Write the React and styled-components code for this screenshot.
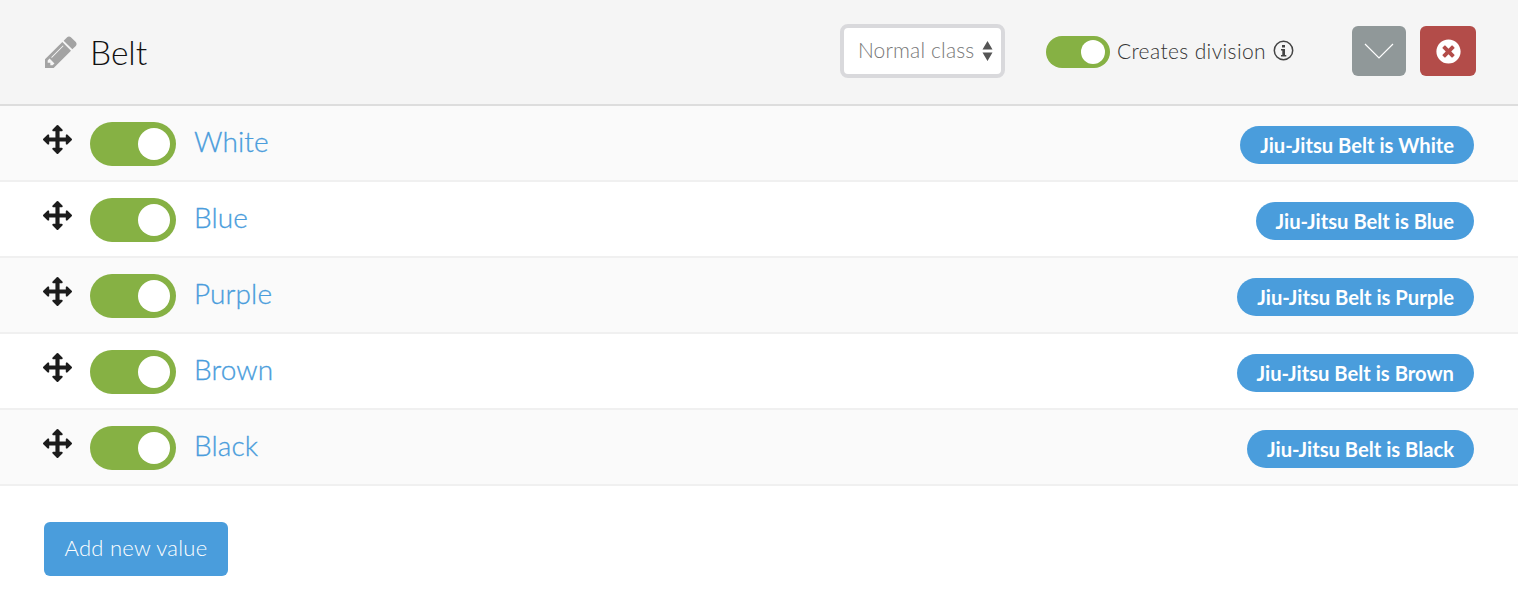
import React from 'react';
import styled, { createGlobalStyle } from 'styled-components';
import { FaTimesCircle } from 'react-icons/fa';

const GlobalStyle = createGlobalStyle`
  html, body {
    margin: 0;
    padding: 0;
    background: #fff;
    font-family: "Lato", "Liberation Sans", sans-serif;
  }
`;

const Page = styled.div`
  width: 1518px;
  height: 612px;
  overflow: hidden;
  background: #fff;
`;

const Header = styled.header`
  display: flex;
  align-items: center;
  height: 104px;
  padding: 0 42px 0 45px;
  background: #f5f5f5;
  border-bottom: 2px solid #ddd;
`;

const Title = styled.h2`
  display: flex;
  align-items: center;
  gap: 13px;
  flex: 1;
  margin: 0;
  font-size: 33.5px;
  font-weight: 300;
  color: #111;
`;

const PencilIcon = styled.svg`
  width: 32px;
  height: 32px;
  fill: #a3a3a3;
`;

const SelectBox = styled.div`
  display: flex;
  align-items: center;
  justify-content: space-between;
  box-sizing: border-box;
  width: 165px;
  height: 54px;
  padding: 0 8px 4px 14px;
  margin: 0 41px 2px 0;
  background: #fff;
  border: 4px solid #d9d9dc;
  border-radius: 8px;
  font-size: 21px;
  font-weight: 300;
  letter-spacing: 0.15px;
  color: #777;
`;

const SelectArrows = styled.svg`
  width: 11px;
  height: 22px;
  fill: #555;
  margin-top: 4px;
`;

const Track = styled.div`
  display: flex;
  align-items: center;
  justify-content: flex-end;
  flex: none;
  box-sizing: border-box;
  width: ${p => (p.$small ? 64 : 86)}px;
  height: ${p => (p.$small ? 32 : 44)}px;
  margin-top: ${p => (p.$small ? 0 : 2)}px;
  padding-right: ${p => (p.$small ? 5 : 6)}px;
  background: #86b144;
  border-radius: 22px;
`;

const Knob = styled.div`
  width: ${p => (p.$small ? 24 : 32)}px;
  height: ${p => (p.$small ? 24 : 32)}px;
  background: #fff;
  border-radius: 50%;
`;

const DivisionLabel = styled.div`
  display: flex;
  align-items: center;
  gap: 7px;
  margin: 0 58px 4px 7px;
  font-size: 21px;
  font-weight: 300;
  letter-spacing: 0.38px;
  color: #333;
`;

const InfoIcon = styled.svg`
  width: 21px;
  height: 21px;
`;

const SquareButton = styled.button`
  display: flex;
  align-items: center;
  justify-content: center;
  width: ${p => p.$width}px;
  height: 50px;
  margin: 0 0 2px ${p => p.$gap || 0}px;
  padding: 0;
  border: 0;
  border-radius: 6px;
  background: ${p => p.$color};
  color: #fff;
`;

const ChevronIcon = styled.svg`
  width: 30px;
  height: 16px;
  fill: none;
  stroke: #fff;
  stroke-width: 1.2;
`;

const Row = styled.div`
  display: flex;
  align-items: center;
  box-sizing: border-box;
  height: 76px;
  padding: 0 44px 0 43px;
  background: ${p => (p.$striped ? '#fafafa' : '#fff')};
  border-bottom: 2px solid #f0f0f0;
`;

const MoveIcon = styled.svg`
  flex: none;
  width: 29px;
  height: 29px;
  margin: -8px 18px 0 0;
  fill: #1c1c1c;
`;

const ValueName = styled.a`
  flex: 1;
  margin: -4px 0 0 18px;
  font-size: 28px;
  font-weight: 300;
  letter-spacing: 0.1px;
  color: #4a9ddc;
  -webkit-text-stroke: 0.3px #4a9ddc;
`;

const Tag = styled.span`
  display: flex;
  align-items: center;
  box-sizing: border-box;
  height: 38px;
  padding: 0 20px;
  margin: 4px 0 0;
  background: #4a9ddc;
  border-radius: 19px;
  font-size: 20.2px;
  font-weight: 700;
  color: #fff;
`;

const Footer = styled.div`
  padding: 36px 44px;
`;

const AddButton = styled.button`
  width: 184px;
  height: 54px;
  padding: 0 0 4px;
  border: 0;
  border-radius: 6px;
  background: #4a9ddc;
  font-family: inherit;
  font-size: 22px;
  font-weight: 300;
  letter-spacing: 0.25px;
  color: #fff;
`;

const values = ['White', 'Blue', 'Purple', 'Brown', 'Black'];

const App = () => {
  return (
    <>
      <GlobalStyle />
      <Page>
        <Header>
          <Title>
            <PencilIcon viewBox="128 128 1536 1536">
              <path d="M491 1536l91-91-235-235-91 91v107h128v128h107zm523-928q0-22-22-22-10 0-17 7l-542 542q-7 7-7 17 0 22 22 22 10 0 17-7l542-542q7-7 7-17zm-54-192l416 416-832 832h-416v-416zm683 96q0 53-37 90l-166 166-416-416 166-165q36-38 90-38 53 0 91 38l235 234q37 39 37 91z" />
            </PencilIcon>
            Belt
          </Title>
          <SelectBox>
            Normal class
            <SelectArrows viewBox="0 0 11 22">
              <path d="M5.5 1 10.5 9.5H.5zM.5 12.5h10L5.5 21z" />
            </SelectArrows>
          </SelectBox>
          <Track $small>
            <Knob $small />
          </Track>
          <DivisionLabel>
            Creates division
            <InfoIcon viewBox="0 0 21 21">
              <circle cx="10.5" cy="10.5" r="9.2" fill="none" stroke="#444" strokeWidth="1.5" />
              <path d="M9 5h3v2.4H9zM8 9h4v6h1.3v1.6H8V15h1.3v-4.4H8z" fill="#444" />
            </InfoIcon>
          </DivisionLabel>
          <SquareButton $width={54} $color="#909899" aria-label="Collapse">
            <ChevronIcon viewBox="0 0 30 16">
              <path d="M1 1 15 15 29 1" />
            </ChevronIcon>
          </SquareButton>
          <SquareButton $width={56} $gap={14} $color="#b34c49" aria-label="Delete">
            <FaTimesCircle size={25} />
          </SquareButton>
        </Header>
        {values.map((value, index) => (
          <Row key={value} $striped={index % 2 === 0}>
            <MoveIcon viewBox="0 0 1792 1792">
              <path d="M1792 896q0 26-19 45l-256 256q-19 19-45 19t-45-19-19-45v-128h-384v384h128q26 0 45 19t19 45-19 45l-256 256q-19 19-45 19t-45-19l-256-256q-19-19-19-45t19-45 45-19h128v-384h-384v128q0 26-19 45t-45 19-45-19l-256-256q-19-19-19-45t19-45l256-256q19-19 45-19t45 19 19 45v128h384v-384h-128q-26 0-45-19t-19-45 19-45l256-256q19-19 45-19t45 19l256 256q19 19 19 45t-19 45-45 19h-128v384h384v-128q0-26 19-45t45-19 45 19l256 256q19 19 19 45z" />
            </MoveIcon>
            <Track>
              <Knob />
            </Track>
            <ValueName>{value}</ValueName>
            <Tag>Jiu-Jitsu Belt is {value}</Tag>
          </Row>
        ))}
        <Footer>
          <AddButton>Add new value</AddButton>
        </Footer>
      </Page>
    </>
  );
};

export default App;
